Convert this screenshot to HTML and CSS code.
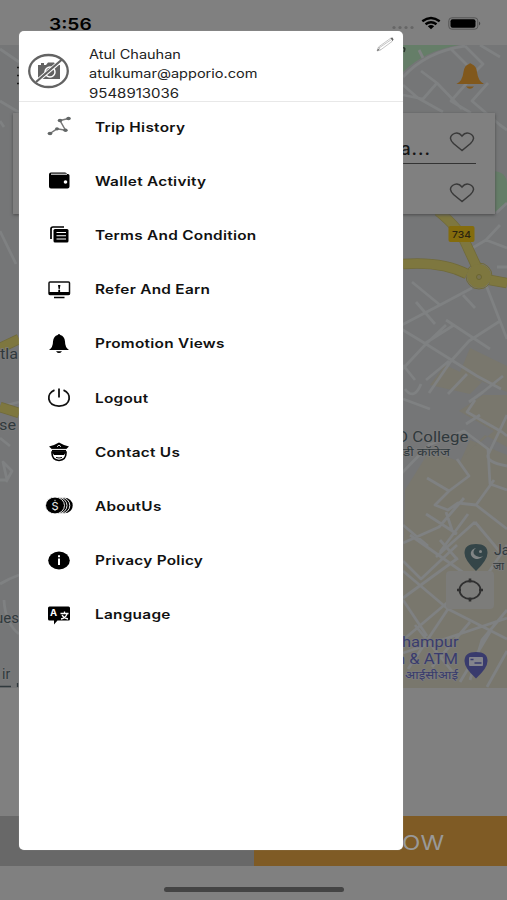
FILE: index.html
```html
<!DOCTYPE html>
<html lang="en">
<head>
<meta charset="utf-8">
<title>Menu</title>
<link rel="stylesheet" href="styles.css">
</head>
<body>
<div class="screen">
  <header class="status">
    <span class="clock wide">3:56</span>
    <svg class="status-icons" width="96" height="24" viewBox="390 12 96 24">
      <g fill="#666"><circle cx="394" cy="27.500" r="1.600"/><circle cx="400" cy="27.500" r="1.600"/><circle cx="406" cy="27.500" r="1.600"/><circle cx="412" cy="27.500" r="1.600"/></g>
      <g fill="none" stroke="#000" stroke-width="2.400"><path d="M422.300 21.300Q431 14.800 439.700 21.300"/><path d="M425.500 24.300Q431 20.200 436.500 24.300"/></g>
      <path d="M427.800 26.200Q431 24 434.200 26.200L431 29.300Z"/>
      <rect x="448.800" y="17.800" width="29" height="11.400" rx="3" fill="none" stroke="#555"/>
      <rect x="450.500" y="19.300" width="25" height="8.400" rx="2"/>
      <path d="M479 21.500Q481.500 23.500 479 25.500Z" fill="#444"/>
    </svg>
  </header>
  <main class="map">
    <svg class="map-canvas" width="507" height="643" viewBox="0 45 507 643">
      <rect y="45" width="507" height="643" fill="#757677"/>
      <g fill="#79776d">
        <path d="M470 348l37 18v26l-47-20zM430 385l15-20 37 17-12 12zM405 490l25-40 30 12 10-22 37 15v235H403v-110z"/>
        <path d="M465 455l20-20 22 12v-52h-24l-24 16 35 20z"/>
      </g>
      <g fill="#657e68"><path d="M403 45h56q-35 6-56 27z"/><path d="M492 171q15 0 15 14v20l-10 7h-5z"/></g>
      <g class="road">
        <path d="M403 77Q427 51 465 46M423 58l-4-8M450 48l22 22M465 46l18 18-8 8M480 45l20 12M403 85l15 13M403 95l20 4 14-16-16-12M437 83l25 26M473 76l-22 25 20 12M488 83l-16 18 28 24 7 5M418 98l25 14M496 213l11-10"/>
        <path d="M412 282l28 23M440 305l32-17M440 305l-42 22M416 302l19 22M463 295l12 13M398 327l28 17 51 32 24 13M486 285l14 36 7 18M500 321l-31 20-18 20-22 32M446 320l44 29M446 325l-21 20-28 30M449 361l-23 19M467 374l-19 20M403 365l12 15M503 376l-20 16-14 10M469 250l17-10 21 8M497 267h10M486 240l14-15M424 344l30-19"/>
        <path d="M405 389q9 12 16-5M403 399l27 10M475 400l-8 12 35 20 5 4M480 415l-14 9M507 415l-19 40q-2 7 19 11M400 475l29-30 35-14 24 18 2 35 17 6M427 478l22 13 20-15-12-17M449 491l-14 14 13 5 10-7 18 2 31 24M476 505l18-25M446 512l6 18M403 543l36-16 25-29M426 514l31 20M468 514l-28 38M475 522l-39 35M475 522l25 30M403 525l25 21"/>
        <path d="M403 561l18 18 36-34M410 535l78 55M403 598l55-40M403 571l45 38 59 30M403 640l65-55M403 600l24 36M448 609l-40 60M470 622l-38 45M490 632l-30 50M507 545l-18 27M507 610l-25 30-12 40M403 653l104-35M415 625l40 50M440 540l16 18M507 651l-20 36"/>
        <path d="M0 49l19 13M0 101l20 12M0 121l4 6M0 231l16 33M0 407l19-5M0 438l10 8M0 480h7l-4-18 9 9-6 11M0 584q8-5 19-9M4 600q1 23 15 34"/>
      </g>
      <g class="highway-edge"><path d="M438 211q22 18 28 33l13 28M403 264q39-3 64 10M490 280l17 3M0 348l19-9M0 407l19 6"/><circle cx="479" cy="276" r="13"/></g>
      <g class="highway"><path d="M438 211q22 18 28 33l13 28M403 264q39-3 64 10M490 280l17 3M0 348l19-9M0 407l19 6"/></g>
      <circle cx="479" cy="276" r="12" fill="#7e773f"/><circle cx="479" cy="277" r="2.500" fill="#777252" stroke="#6c662f"/>
      <rect x="448.500" y="226" width="26" height="16" rx="2" fill="#846c0d"/>
      <text x="452" y="238" class="shield" textLength="19" lengthAdjust="spacingAndGlyphs">734</text>
      <g class="place">
        <text x="397" y="441.500" textLength="71.500" lengthAdjust="spacingAndGlyphs">D College</text>
        <text x="403" y="456" class="small" textLength="47" lengthAdjust="spacingAndGlyphs">डी कॉलेज</text>
        <text x="494" y="555">Ja</text><text x="493" y="570" class="small">जा</text>
        <text x="0" y="358.500" textLength="18" lengthAdjust="spacingAndGlyphs">tla</text>
        <text x="-1" y="430" textLength="17" lengthAdjust="spacingAndGlyphs">se</text>
        <text x="-5" y="623" textLength="24" lengthAdjust="spacingAndGlyphs">ues</text><text x="2" y="679">ir</text>
      </g>
      <path d="M0 686.500h11M17.500 683v4" stroke="#30393d" stroke-width="1.300"/>
      <g class="place bank">
        <text x="402" y="647" textLength="56.500" lengthAdjust="spacingAndGlyphs">hampur</text>
        <text x="396" y="664" textLength="62" lengthAdjust="spacingAndGlyphs">n &amp; ATM</text>
        <text x="405" y="679" class="small" textLength="53" lengthAdjust="spacingAndGlyphs">आईसीआई</text>
      </g>
      <path d="M464.500 553q0-9 11.500-9t11.500 9q0 7-11.500 18q-11.500-11-11.500-18z" fill="#344548"/>
      <path d="M476 548a6.500 5.500 0 1 0 7 8a5.500 4.500 0 0 1-7-8z" fill="#818585"/><circle cx="480.500" cy="551.500" r="1.500" fill="#818585"/>
      <rect x="446" y="571" width="48" height="38" rx="4" fill="#7c7c7a"/>
      <g fill="none" stroke="#303030" stroke-width="1.800"><ellipse cx="470" cy="590" rx="10.500" ry="9"/><path d="M470 578.500v4M470 597.500v4M457 590h4M479 590h4" stroke-width="2.600"/></g>
      <path d="M464.500 661q0-9 11.500-9t11.500 9q0 7-11.500 17.500q-11.500-10.500-11.500-17.500z" fill="#393b6d"/>
      <rect x="469" y="657" width="14" height="9" rx="1" fill="#83848c"/><path d="M470.500 659.500h3M474.500 663h7" stroke="#393b6d" stroke-width="1.500"/>
      <path d="M17 67.500h3M17 75.500h3M17 83.500h3" stroke="#111" stroke-width="1.600"/>
      <path d="M456.500 84q6-3 7-12q1-7 5.500-8q1-1.500 2.500 0q5 2 5.500 8q1 9 7 12zM466 86.500h8q-4 4.500-8 0z" fill="#81581c"/>
      <path d="M403 48q3-1 1 4" fill="none" stroke="#28312b" stroke-width="1.500"/>
    </svg>
    <section class="address-card">
      <div class="address pickup"><span class="address-text">a...</span><svg width="26" height="22" viewBox="0 0 26 22"><path class="heart" d="M13 19.500L4.500 12.500Q-1 7 3.500 3.500Q9-.2 13 5Q17-.2 22.500 3.500Q27 7 21.500 12.500Z"/></svg></div>
      <div class="address"><svg width="26" height="22" viewBox="0 0 26 22"><path class="heart" d="M13 19.500L4.500 12.500Q-1 7 3.500 3.500Q9-.2 13 5Q17-.2 22.500 3.500Q27 7 21.500 12.500Z"/></svg></div>
    </section>
  </main>
  <div class="actions"><div class="later"></div><div class="now"><span class="wide">NOW</span></div></div>
  <footer class="home"><div class="home-bar"></div></footer>

  <aside class="drawer">
    <div class="profile">
      <svg class="avatar" width="42" height="36" viewBox="0 0 42 36">
        <path d="M10 12h3v-2h3v2h2l2-2.500h6L28 12h4v14H10z" fill="#636363"/>
        <circle cx="22" cy="19" r="5" fill="none" stroke="#fff" stroke-width="1.500"/>
        <path d="M8 29L35 6" stroke="#fff" stroke-width="4"/>
        <g fill="none" stroke="#636363" stroke-width="2.300"><ellipse cx="20.500" cy="18" rx="19.300" ry="16"/><path d="M8 29L34 6.500"/></g>
      </svg>
      <div class="contact"><span class="wide name">Atul Chauhan</span><span class="wide mail">atulkumar@apporio.com</span><span class="wide phone">9548913036</span></div>
      <svg class="pencil" width="20" height="18" viewBox="0 0 20 18"><path d="M2 15l1.500-4L16 2l2 1.500-1 2L5.500 14zM4 12L16.500 3.500M3.500 11L5.500 14" fill="none" stroke="#aaa" stroke-width=".7"/><path d="M2 15l1-2.500 1.500 1.500zM15.500 2L17.500 1.500 18.500 3.500 17.500 5z" fill="#666"/></svg>
    </div>
    <nav class="menu">
      <a class="item"><svg viewBox="0 0 28 24"><path d="M5 18.500l7-4.700 8.500 1.400L15 5.500l8.500-2" fill="none" stroke="#777" stroke-width="1.500"/><g fill="#626666"><ellipse cx="5" cy="18.500" rx="2.400" ry="1.800"/><ellipse cx="12" cy="13.800" rx="2" ry="1.600"/><ellipse cx="20.500" cy="15.200" rx="2.200" ry="1.700"/><ellipse cx="15" cy="5.500" rx="2.300" ry="1.800"/><ellipse cx="23.500" cy="3.500" rx="2.300" ry="1.800"/></g></svg><span class="wide">Trip History</span></a>
      <a class="item"><svg viewBox="0 0 28 24"><path d="M6 3.500h14q2 0 2 1.500h1q1.500 0 1.500 1.500v11q0 2-2 2H6q-2 0-2-2v-12q0-2 2-2z"/><path d="M6 5.200h16" stroke="#fff"/><circle cx="20.500" cy="13" r="1.800" fill="#fff"/></svg><span class="wide">Wallet Activity</span></a>
      <a class="item"><svg viewBox="0 0 28 24"><path d="M6 16V6q0-2 2-2h11" fill="none" stroke="#000" stroke-width="1.700"/><rect x="8.500" y="6" width="15" height="13.500" rx="1.500"/><path d="M11.500 9.500h9.500M11.500 12.700h9.500M11.500 16h9.500" stroke="#fff" stroke-width="1.100"/></svg><span class="wide">Terms And Condition</span></a>
      <a class="item"><svg viewBox="0 0 28 24"><rect x="4" y="4" width="20.500" height="12.500" rx="1" fill="none" stroke="#111" stroke-width="1.500"/><path d="M4 14h20.500v3H4zM9 18.800h10.500v1.500H9zM13 7h2.400l-.7 4.500h-1zM13.300 12h1.800v2h-1.800z"/></svg><span class="wide">Refer And Earn</span></a>
      <a class="item"><svg viewBox="0 0 28 24"><path d="M4 18q4-2.500 4-8.500Q8.500 4 12.700 3q1.300-2 2.600 0Q19.500 4 20 9.500q0 6 4 8.500zM11 19.200h6q-3 3.800-6 0z"/></svg><span class="wide">Promotion Views</span></a>
      <a class="item"><svg viewBox="0 0 28 24"><path d="M9.500 4.200C1 7.500 1.500 19.500 14 20.200C26.500 19.500 27 7.500 18.500 4.200M14 2.500v9" fill="none" stroke="#111" stroke-width="1.800"/></svg><span class="wide">Logout</span></a>
      <a class="item"><svg viewBox="0 0 28 24"><path d="M4 6.500Q10 5 14 2.500Q18 5 24 6.500L21 9.200H7zM7 9.800h14v2H7z"/><path d="M7 12v1q0 7 7 7.500q7-.5 7-7.500v-1z" fill="none" stroke="#000" stroke-width="1.600"/><path d="M7 12h14l-2 3h-10z"/><path d="M11 17.500q3 1 6 0" stroke="#000" fill="none"/><path d="M12 6.800l2-1.800 2 1.800M7 9.400h14" stroke="#fff" fill="none" stroke-width=".9"/></svg><span class="wide">Contact Us</span></a>
      <a class="item"><svg viewBox="0 0 28 24"><ellipse cx="19.500" cy="11.500" rx="8.200" ry="7.800"/><g stroke="#fff" stroke-width=".9"><ellipse cx="16.500" cy="11.500" rx="8.300" ry="8"/><ellipse cx="13.500" cy="11.500" rx="8.500" ry="8"/><ellipse cx="10" cy="11.500" rx="9.500" ry="8.400"/></g><text x="6.400" y="15.500" fill="#ddd" class="coin">S</text><path d="M10 5.800v1.500M10 15.500v1.500" stroke="#ddd"/></svg><span class="wide">AboutUs</span></a>
      <a class="item"><svg viewBox="0 0 28 24"><ellipse cx="14" cy="11.500" rx="10.800" ry="9"/><path d="M13 9.500h2V16h-2zM13 6.300h2v2h-2z" fill="#fff"/></svg><span class="wide">Privacy Policy</span></a>
      <a class="item"><svg viewBox="0 0 28 24"><path d="M4.500 3.500h19q1.500 0 1.500 1.500v11q0 1.500-1.500 1.500h-11L9 21.500v-4H4.500Q3 17.500 3 16V5Q3 3.500 4.500 3.500z"/><text x="5" y="12.500" fill="#fff" class="letter">A</text><path d="M15.500 10.500h8M19.500 8.500v2M22 11q-1.500 4-6 5M17 12q2 3.500 6 4" fill="none" stroke="#fff" stroke-width="1.300"/></svg><span class="wide">Language</span></a>
    </nav>
  </aside>
</div>
</body>
</html>
```
FILE: styles.css
```css
body {
  margin: 0;
  font-family: Inter, "Liberation Sans", sans-serif;
}
svg { display: block; flex: none; }
.screen {
  position: relative;
  display: flex;
  flex-direction: column;
  width: 507px;
  height: 900px;
  overflow: hidden;
  background: #808080;
}
.wide {
  display: block;
  transform: scaleX(1.2);
  transform-origin: left center;
  white-space: nowrap;
}
.status {
  display: flex;
  justify-content: space-between;
  height: 45px;
  padding: 0 21px 0 49px;
  box-sizing: border-box;
}
.clock { margin-top: 14px; font-size: 16px; line-height: 20px; font-weight: 600; }
.status-icons { margin-top: 12px; }
.map { position: relative; height: 643px; }
.road { fill: none; stroke: #7f8182; stroke-width: 2.800; stroke-linejoin: round; }
.highway, .highway-edge { fill: none; stroke: #7e773f; stroke-width: 9; }
.highway-edge { stroke: #706a3b; stroke-width: 10.500; }
.highway-edge circle { stroke-width: 1; }
.shield { font-size: 9.500px; font-weight: 500; fill: #292410; }
.place {
  fill: #30393d;
  font-family: Roboto, "Noto Sans", sans-serif;
  font-size: 14px;
  paint-order: stroke;
  stroke: #7b7b7b;
  stroke-width: 1.500px;
}
.small { font-size: 11px; }
.bank { fill: #393b6d; }
.address-card {
  position: absolute;
  left: 13px;
  top: 68px;
  width: 482px;
  height: 101px;
  background: #808080;
  box-shadow: 0 1px 3px #4a4a4a;
}
.address {
  display: flex;
  align-items: center;
  justify-content: flex-end;
  gap: 18px;
  height: 51px;
  margin: 0 19px;
  padding-top: 7px;
  box-sizing: border-box;
}
.pickup { border-bottom: 1px solid #333; }
.address-text { font-size: 18px; font-weight: 500; letter-spacing: 1px; padding-top: 14px; color: #151515; }
.address svg { margin-right: 1px; }
.heart { fill: none; stroke: #393939; stroke-width: 1.500; }
.actions { display: flex; height: 50px; margin-top: 128px; }
.later { width: 254px; background: #686868; }
.now { flex: 1; background: #7f5b25; }
.now span { margin: 14px 0 0 130px; font-size: 20px; line-height: 26px; color: #999; }
.home { display: flex; justify-content: center; }
.home-bar { width: 180px; height: 5px; margin-top: 21px; border-radius: 3px; background: #444; }
.drawer {
  position: absolute;
  left: 19px;
  top: 31px;
  width: 384px;
  height: 819px;
  border-radius: 5px;
  background: #fff;
  box-shadow: 0 0 1px #aaa;
}
.profile {
  position: relative;
  display: flex;
  height: 71px;
  box-sizing: border-box;
  border-bottom: 1px solid #e8e8e8;
}
.avatar { margin: 22px 0 0 9px; }
.contact {
  display: flex;
  flex-direction: column;
  margin: 14px 0 0 19px;
  font-size: 12.500px;
  line-height: 19.400px;
  color: #222;
}
.name, .mail { transform: scaleX(1.162); }
.pencil { position: absolute; right: 8px; top: 5px; }
.menu { display: flex; flex-direction: column; margin-top: -2px; }
.item {
  display: flex;
  align-items: center;
  gap: 22px;
  height: 54.200px;
  padding-left: 26px;
  font-size: 12.800px;
  font-weight: 600;
  letter-spacing: .23px;
  color: #111;
}
.item svg { width: 28px; height: 24px; letter-spacing: 0; }
.coin { font-size: 11px; font-weight: 500; }
.letter { font-size: 9.500px; font-weight: 700; }
```
